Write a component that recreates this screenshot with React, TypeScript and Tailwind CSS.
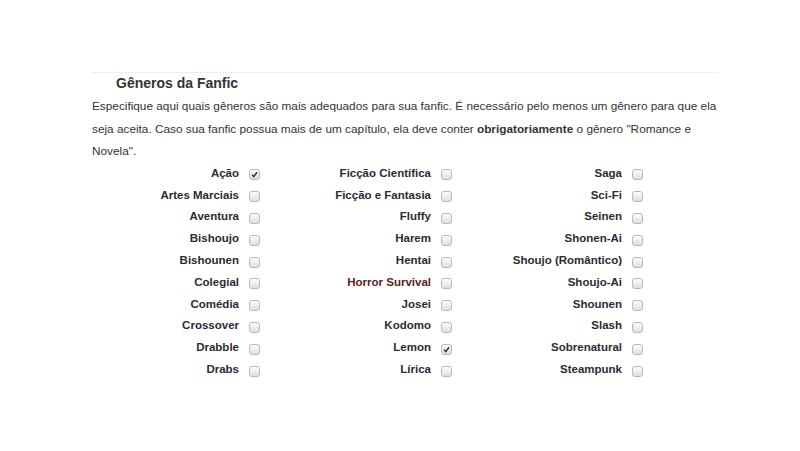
import React from 'react';

const col1 = ['Ação', 'Artes Marciais', 'Aventura', 'Bishoujo', 'Bishounen', 'Colegial', 'Comédia', 'Crossover', 'Drabble', 'Drabs'];
const col2 = ['Ficção Científica', 'Ficção e Fantasia', 'Fluffy', 'Harem', 'Hentai', 'Horror Survival', 'Josei', 'Kodomo', 'Lemon', 'Lírica'];
const col3 = ['Saga', 'Sci-Fi', 'Seinen', 'Shonen-Ai', 'Shoujo (Romântico)', 'Shoujo-Ai', 'Shounen', 'Slash', 'Sobrenatural', 'Steampunk'];

const checked = ['Ação', 'Lemon'];

function Box({ on }: { on: boolean }) {
    return (
        <span className="ml-[10px] mt-[3px] flex h-[11px] w-[11px] shrink-0 items-center justify-center rounded-[3px] border border-[#b9b9b9] bg-gradient-to-b from-[#fdfdfd] to-[#dedede]">
            {on && (
                <svg width="7" height="7" viewBox="0 0 7 7">
                    <path d="M1 3.8 L2.8 5.6 L6 1.2" fill="none" stroke="#333" strokeWidth="1.5" />
                </svg>
            )}
        </span>
    );
}

function Item({ name }: { name: string }) {
    return (
        <div className="flex h-[21.8px] items-center justify-end">
            <span className={`text-[11.5px] font-bold ${name === 'Horror Survival' ? 'text-[#5a2222]' : 'text-[#2b2b33]'}`}>{name}</span>
            <Box on={checked.includes(name)} />
        </div>
    );
}

export default function App() {
    const rows = col1.map((_, i) => i);
    return (
        <div className="h-[451px] w-[800px] bg-white pt-[72px]" style={{ fontFamily: '"Liberation Sans", Arial, sans-serif' }}>
            <div className="ml-[92px] w-[626px] border-t border-[#eeeeee]">
                <h2 className="pl-6 text-[14px] font-bold leading-[20px] text-[#333]">Gêneros da Fanfic</h2>
                <p className="mt-[2px] w-[630px] text-[11.8px] leading-[22.5px] text-[#333]">
                    Especifique aqui quais gêneros são mais adequados para sua fanfic. É necessário pelo menos um gênero para que ela seja aceita. Caso sua fanfic possua mais de um capítulo, ela deve conter <b>obrigatoriamente</b> o gênero "Romance e Novela".
                </p>
                <div className="grid grid-cols-[168px_192px_191px]">
                    {rows.map((i) => (
                        <React.Fragment key={i}>
                            <Item name={col1[i]} />
                            <Item name={col2[i]} />
                            <Item name={col3[i]} />
                        </React.Fragment>
                    ))}
                </div>
            </div>
        </div>
    );
}
